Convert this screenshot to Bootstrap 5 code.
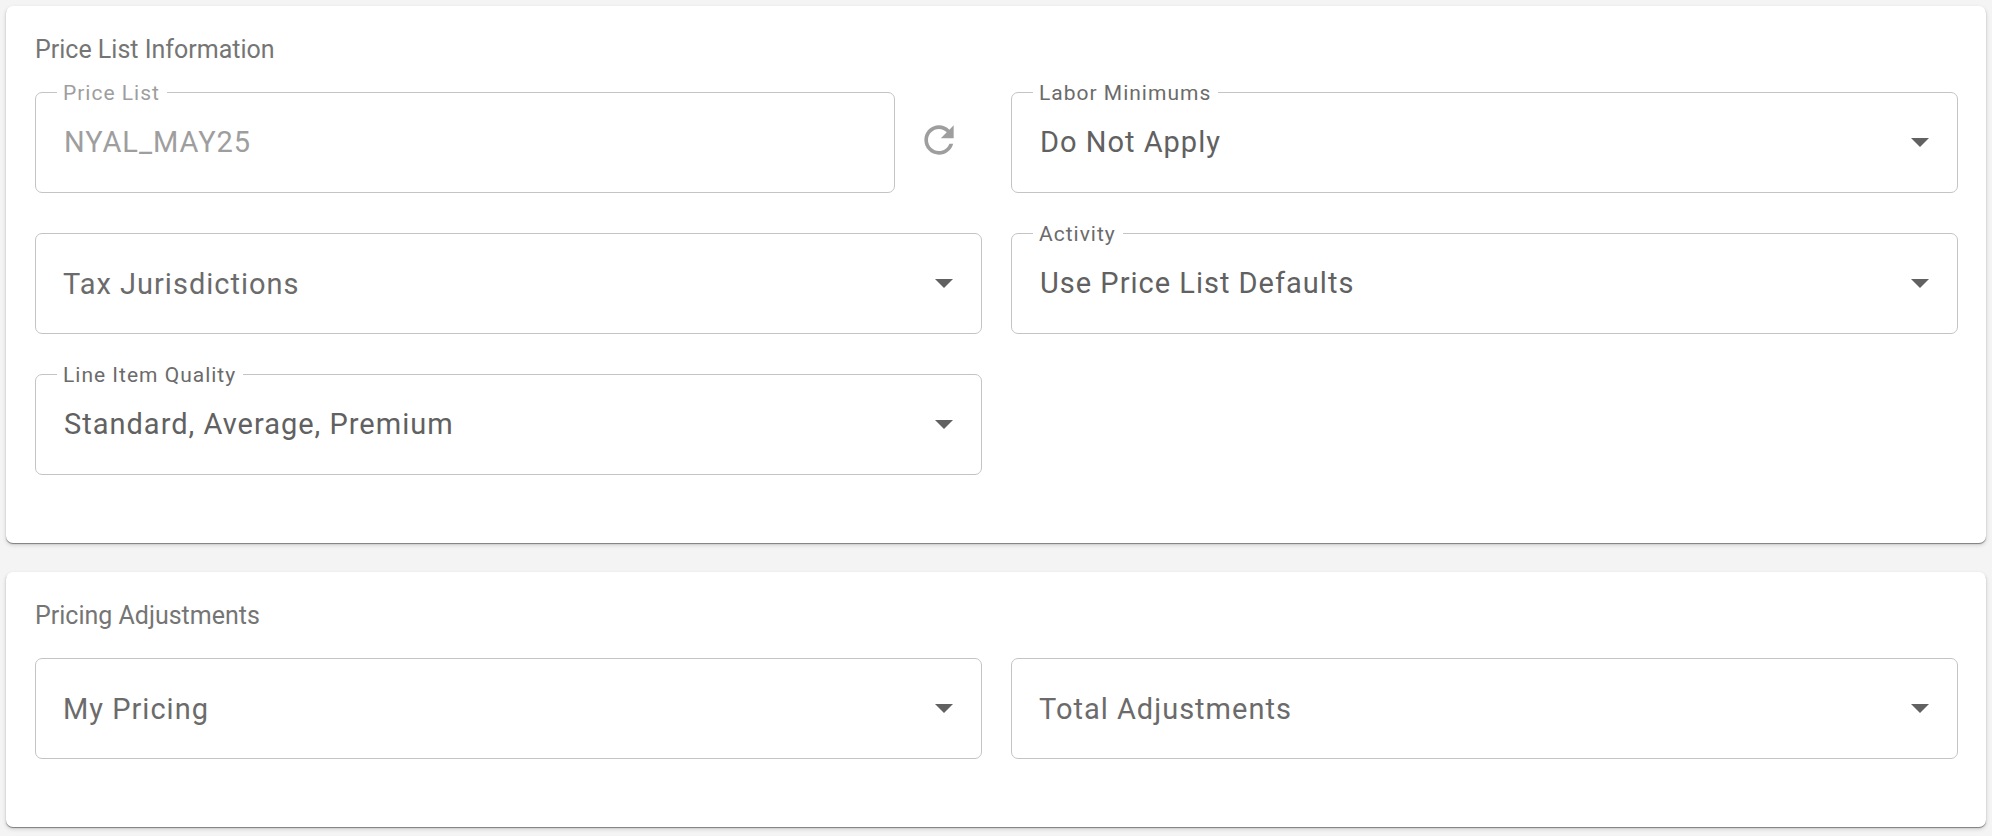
<!DOCTYPE html>
<html lang="en">
<head>
<meta charset="utf-8">
<meta name="viewport" content="width=device-width, initial-scale=1">
<title>Price List</title>
<link href="https://cdn.jsdelivr.net/npm/bootstrap@5.3.0/dist/css/bootstrap.min.css" rel="stylesheet">
<style>
  body { background: #f4f4f4; font-family: Roboto, "Liberation Sans", sans-serif; }
  .page { padding: 6px; gap: 29px; }
  .panel {
    border: 0;
    border-radius: 7px;
    padding: 29px 28px 68px 29px;
    box-shadow: 0 1px 1px rgba(0, 0, 0, .42), 0 2px 4px rgba(0, 0, 0, .16);
  }
  .panel-title { font-size: 25px; line-height: 30px; margin-bottom: 27px; font-weight: 400; color: #757575; }
  .field-grid { --bs-gutter-x: 29px; --bs-gutter-y: 40px; }
  .field-box.form-select, .field-box.form-control {
    height: 101px;
    padding: 0 64px 2px 28px;
    border: 1px solid #c4c4c4;
    border-radius: 7px;
    font-size: 29px;
    line-height: 36px;
    letter-spacing: 1px;
    color: #616161;
    background-color: #fff;
  }
  .field-box.form-select {
    background-image: url("data:image/svg+xml,%3csvg xmlns='http://www.w3.org/2000/svg' viewBox='0 0 18 9'%3e%3cpath fill='%23616161' d='M0 0h18L9 9z'/%3e%3c/svg%3e");
    background-size: 18px 9px;
    background-position: right 28px center;
  }
  .field-box.form-control:disabled { color: #9e9e9e; opacity: 1; }
  .field-label, .field-prompt {
    position: absolute;
    transform: translateY(-50%);
    letter-spacing: 1px;
    color: #6b6b6b;
  }
  .field-label {
    top: 0;
    left: 22px;
    padding: 1px 7px 0 6px;
    background: #fff;
    font-size: 21px;
    line-height: 26px;
  }
  /* Label of an empty field, resting where its value will go */
  .field-prompt {
    top: 50%;
    left: 28px;
    font-size: 29px;
    line-height: 36px;
    pointer-events: none;
  }
  .field-label.is-disabled { color: #9e9e9e; }
  .refresh-btn { width: 87px; border: 0; padding: 0 0 5px; color: #9e9e9e; }
</style>
</head>
<body>
<main class="page d-flex flex-column">
  <section class="card panel">
    <h2 class="panel-title">Price List Information</h2>
    <div class="row field-grid">
      <div class="col-12 col-md-6">
        <div class="d-flex">
          <div class="position-relative flex-grow-1">
            <input class="form-control field-box" id="priceList" type="text" value="NYAL_MAY25" disabled>
            <label class="field-label is-disabled" for="priceList">Price List</label>
          </div>
          <button class="btn refresh-btn flex-shrink-0" type="button" aria-label="Refresh price list">
            <svg width="44" height="44" viewBox="0 0 24 24" fill="currentColor" aria-hidden="true"><path d="M17.65 6.35C16.2 4.9 14.21 4 12 4c-4.42 0-7.99 3.58-7.99 8s3.57 8 7.99 8c3.73 0 6.84-2.55 7.73-6h-2.08c-.82 2.33-3.04 4-5.65 4-3.31 0-6-2.69-6-6s2.69-6 6-6c1.66 0 3.14.69 4.22 1.78L13 11h7V4l-2.35 2.35z"/></svg>
          </button>
        </div>
      </div>
      <div class="col-12 col-md-6">
        <div class="position-relative">
          <select class="form-select field-box" id="laborMinimums"><option>Do Not Apply</option></select>
          <label class="field-label" for="laborMinimums">Labor Minimums</label>
        </div>
      </div>
      <div class="col-12 col-md-6">
        <div class="position-relative">
          <select class="form-select field-box" id="taxJurisdictions"><option value=""></option></select>
          <label class="field-prompt" for="taxJurisdictions">Tax Jurisdictions</label>
        </div>
      </div>
      <div class="col-12 col-md-6">
        <div class="position-relative">
          <select class="form-select field-box" id="activity"><option>Use Price List Defaults</option></select>
          <label class="field-label" for="activity">Activity</label>
        </div>
      </div>
      <div class="col-12 col-md-6">
        <div class="position-relative">
          <select class="form-select field-box" id="quality"><option>Standard, Average, Premium</option></select>
          <label class="field-label" for="quality">Line Item Quality</label>
        </div>
      </div>
    </div>
  </section>

  <section class="card panel">
    <h2 class="panel-title">Pricing Adjustments</h2>
    <div class="row field-grid">
      <div class="col-12 col-md-6">
        <div class="position-relative">
          <select class="form-select field-box" id="myPricing"><option value=""></option></select>
          <label class="field-prompt" for="myPricing">My Pricing</label>
        </div>
      </div>
      <div class="col-12 col-md-6">
        <div class="position-relative">
          <select class="form-select field-box" id="totalAdjustments"><option value=""></option></select>
          <label class="field-prompt" for="totalAdjustments">Total Adjustments</label>
        </div>
      </div>
    </div>
  </section>
</main>
<script src="https://cdn.jsdelivr.net/npm/bootstrap@5.3.0/dist/js/bootstrap.bundle.min.js"></script>
</body>
</html>
